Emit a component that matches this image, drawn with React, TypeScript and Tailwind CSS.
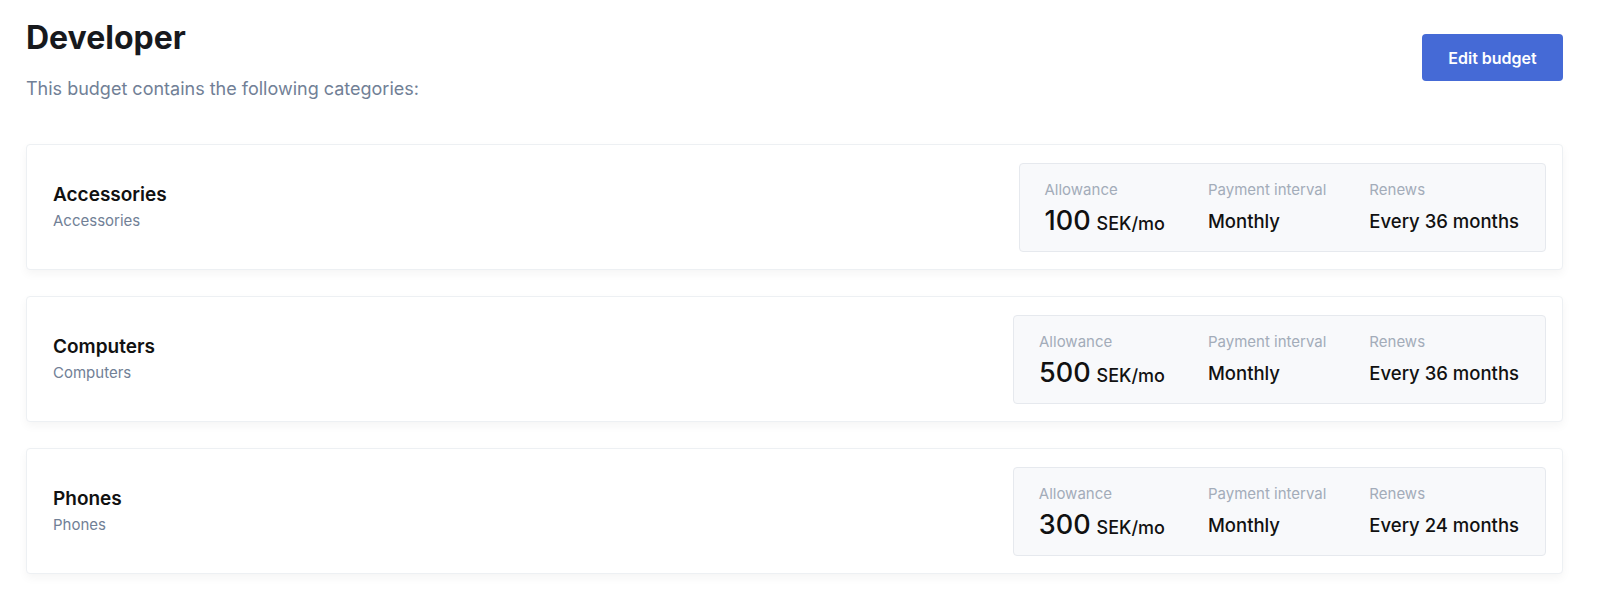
import React from "react";

const cats = [
  { name: "Accessories", amount: "100", renews: "Every 36 months" },
  { name: "Computers", amount: "500", renews: "Every 36 months" },
  { name: "Phones", amount: "300", renews: "Every 24 months" },
];

function Stat({ label, children }: { label: string; children: React.ReactNode }) {
  return (
    <div className="flex flex-col">
      <div className="text-[15px] leading-[20px] text-[#a3acb9]">{label}</div>
      <div className="mt-[5px] flex h-[32px] items-baseline">{children}</div>
    </div>
  );
}

export default function App() {
  return (
    <div
      className="min-h-[591px] bg-white text-[#1a202c]"
      style={{ fontFamily: "Inter, 'Noto Sans', sans-serif" }}
    >
      <div className="ml-[26px] w-[1537px] pt-[18px]">
        <div className="flex items-start justify-between">
          <div>
            <h1 className="text-[32px] font-bold leading-[40px] text-[#17191d]">Developer</h1>
            <p className="mt-[19px] text-[18px] leading-[24px] text-[#718096]">
              This budget contains the following categories:
            </p>
          </div>
          <button className="mt-[16px] h-[47px] w-[141px] rounded-[4px] bg-[#456ad6] text-[16px] font-semibold text-white">
            Edit budget
          </button>
        </div>
        <div className="mt-[43px] flex flex-col gap-[26px]">
          {cats.map((c) => (
            <div
              key={c.name}
              className="flex h-[126px] items-center justify-between rounded-[4px] border border-[#edf0f3] bg-white pl-[26px] pr-[16px] shadow-[0_4px_10px_rgba(0,0,0,0.045)]"
            >
              <div>
                <div className="text-[19px] font-semibold leading-[24px] text-[#111]">{c.name}</div>
                <div className="mt-[4.5px] text-[15px] leading-[20px] text-[#718096]">{c.name}</div>
              </div>
              <div className="flex h-[89px] items-start gap-[43px] rounded-[4px] border border-[#e6e9ee] bg-[#f8f9fb] pl-[25px] pr-[26px] pt-[16px]">
                <Stat label="Allowance">
                  <span className="text-[27px] font-medium leading-[32px] text-[#111]">{c.amount}</span>
                  <span className="ml-[6px] text-[18px] font-medium leading-[32px] text-[#111]">SEK/mo</span>
                </Stat>
                <Stat label="Payment interval">
                  <span className="text-[18.5px] font-medium leading-[32px] text-[#111]">Monthly</span>
                </Stat>
                <Stat label="Renews">
                  <span className="text-[18.5px] font-medium leading-[32px] text-[#111]">{c.renews}</span>
                </Stat>
              </div>
            </div>
          ))}
        </div>
      </div>
    </div>
  );
}
